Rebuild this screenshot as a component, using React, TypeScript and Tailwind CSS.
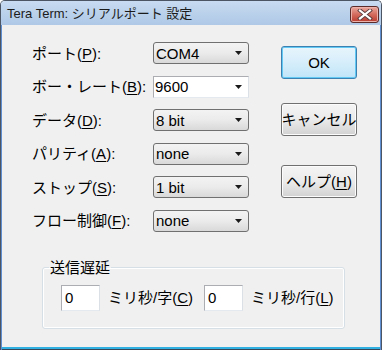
import React from "react";

const FONT = "font-['Liberation_Sans','Noto_Sans_CJK_JP',sans-serif]";

const ROWS = [
  { label: "ポート", key: "P", value: "COM4", editable: false },
  { label: "ボー・レート", key: "B", value: "9600", editable: true },
  { label: "データ", key: "D", value: "8 bit", editable: false },
  { label: "パリティ", key: "A", value: "none", editable: false },
  { label: "ストップ", key: "S", value: "1 bit", editable: false },
  { label: "フロー制御", key: "F", value: "none", editable: false },
];

function Arrow() {
  return (
    <svg width="7" height="4" viewBox="0 0 7 4" className="shrink-0">
      <polygon points="0,0 7,0 3.5,4" fill="#1a1a1a" />
    </svg>
  );
}

function Combo({ value, editable }: { value: string; editable: boolean }) {
  return editable ? (
    <div className="flex h-[22px] w-[96px] items-center justify-between border border-[#abadb3] border-b-[#e3e9ef] border-r-[#dbdfe6] bg-white pl-[1px] pr-[6px]">
      <span className="text-[15px] leading-none">{value}</span>
      <Arrow />
    </div>
  ) : (
    <div className="flex h-[22px] w-[96px] items-center justify-between rounded-[3px] border border-[#707070] bg-gradient-to-b from-[#f3f3f3] via-[#ebebeb] to-[#d9d9d9] pl-[2px] pr-[6px]">
      <span className="text-[15px] leading-none">{value}</span>
      <Arrow />
    </div>
  );
}

function Key({ k }: { k: string }) {
  return (
    <>
      (<span className="underline underline-offset-[2px]">{k}</span>)
    </>
  );
}

function Button({ children, primary, className }: { children: React.ReactNode; primary?: boolean; className?: string }) {
  return (
    <div
      className={
        "flex h-[33px] w-[76px] items-center justify-center whitespace-nowrap rounded-[3px] border text-[15px] leading-none " +
        (primary
          ? "border-[#3c7fb1] bg-gradient-to-b from-[#e8f5fc] via-[#d6eefb] to-[#bfe4f8] shadow-[inset_0_0_0_1px_#62c9f5] "
          : "border-[#707070] bg-gradient-to-b from-[#f4f4f4] via-[#ebebeb] to-[#d2d2d2] shadow-[inset_0_0_0_1px_#fcfcfc] ") +
        (className ?? "")
      }
    >
      {children}
    </div>
  );
}

function CloseIcon() {
  return (
    <svg width="16" height="11" viewBox="0 0 16 11">
      <path d="M3 1.5 L13 9.5 M13 1.5 L3 9.5" stroke="#5a3c3c" strokeWidth="4" strokeLinecap="square" />
      <path d="M3 1.5 L13 9.5 M13 1.5 L3 9.5" stroke="#ffffff" strokeWidth="2.2" strokeLinecap="square" />
    </svg>
  );
}

export default function App() {
  return (
    <div className={"h-[350px] w-[383px] bg-white text-black " + FONT}>
      <div className="flex h-[350px] w-[382px] flex-col overflow-hidden rounded-tl-[5px] rounded-tr-[5px] border border-b-0 border-[#4b5564]">
        <div className="flex h-[24px] shrink-0 items-center justify-between bg-gradient-to-b from-[#c8dbf1] to-[#aec8e6] pl-[6px] pr-[2px]">
          <span className="text-[13px] leading-none text-[#1b1b1b]">Tera Term: シリアルポート 設定</span>
          <div className="mt-[2px] flex h-[17px] w-[29px] items-center justify-center rounded-[3px] border border-[#5b2b29] bg-gradient-to-b from-[#e8a89f] via-[#d36b5e] to-[#b8392d] shadow-[inset_0_0_0_1px_#eab2aa]">
            <CloseIcon />
          </div>
        </div>
        <div className="flex flex-1 flex-col border-l border-r border-[#5f8fd1] bg-[#f0f0f0]">
          <div className="flex pl-[30px] pt-[17px]">
            <div className="flex flex-col gap-[11.6px]">
              {ROWS.map((r) => (
                <div key={r.key} className="flex h-[22px] items-center">
                  <span className="w-[121px] whitespace-nowrap text-[15px] leading-none">
                    {r.label}
                    <Key k={r.key} />:
                  </span>
                  <Combo value={r.value} editable={r.editable} />
                </div>
              ))}
            </div>
            <div className="ml-[32px] flex flex-col pt-[4px]">
              <Button primary>OK</Button>
              <Button className="mt-[24px]">キャンセル</Button>
              <Button className="mt-[29px]">
                ヘルプ
                <Key k="H" />
              </Button>
            </div>
          </div>
          <fieldset className="ml-[40px] mt-[28px] h-[69px] w-[303px] rounded-[3px] border border-[#d5dfe5] shadow-[inset_0_0_0_1px_#ffffff]">
            <legend className="ml-[6px] px-[1px] text-[15px] leading-[15px]">送信遅延</legend>
            <div className="mt-[10px] flex items-center pl-[18px]">
              <div className="flex h-[26px] w-[39px] items-center border border-[#abadb3] border-b-[#e3e9ef] border-r-[#dbdfe6] bg-white pl-[3px] text-[15px] leading-none">
                0
              </div>
              <span className="ml-[8px] whitespace-nowrap text-[15px] leading-none">
                ミリ秒/字<Key k="C" />
              </span>
              <div className="ml-[11px] flex h-[26px] w-[39px] items-center border border-[#abadb3] border-b-[#e3e9ef] border-r-[#dbdfe6] bg-white pl-[3px] text-[15px] leading-none">
                0
              </div>
              <span className="ml-[8px] whitespace-nowrap text-[15px] leading-none">
                ミリ秒/行<Key k="L" />
              </span>
            </div>
          </fieldset>
          <div className="mt-auto h-[2px] bg-[#2fb0e0]" />
          <div className="h-[1px] bg-[#3a4656]" />
        </div>
      </div>
    </div>
  );
}
